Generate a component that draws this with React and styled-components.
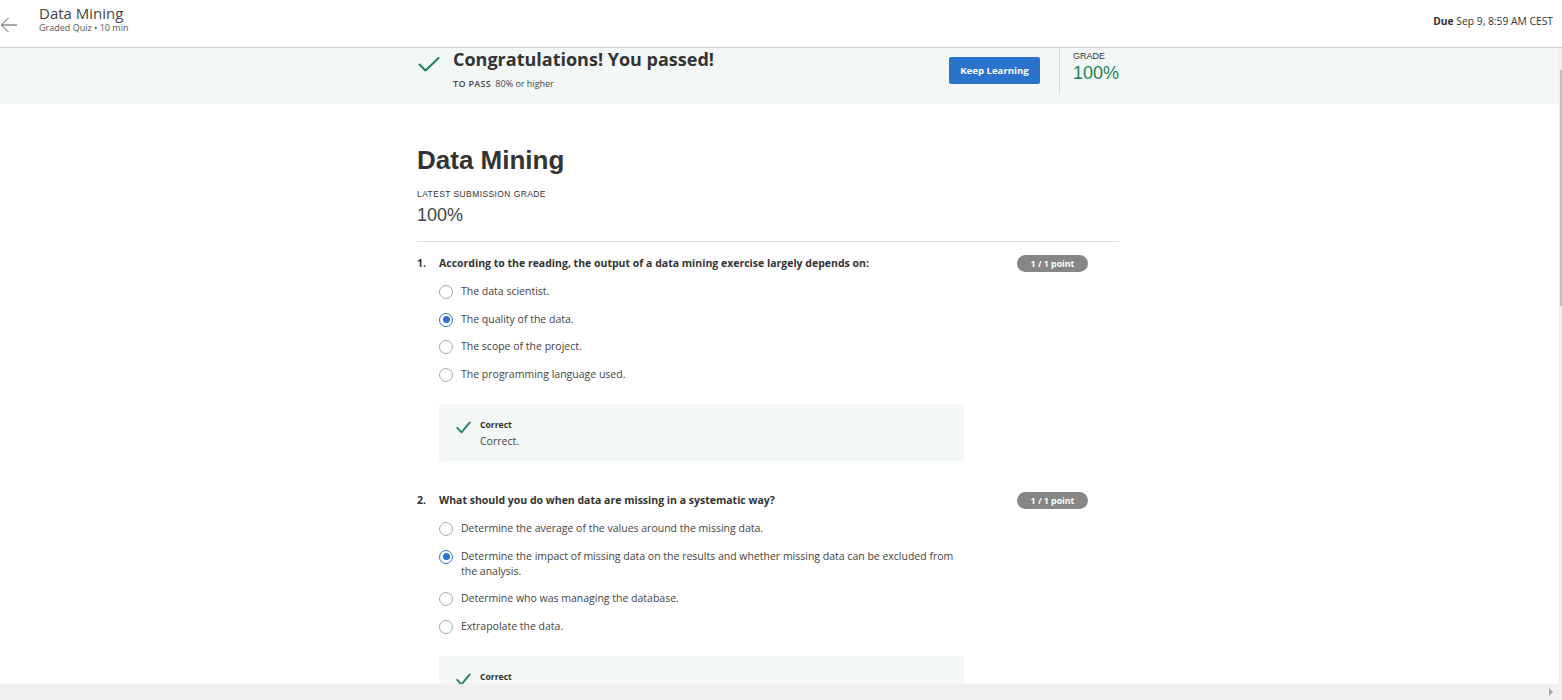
import React from "react";
import styled, { createGlobalStyle } from "styled-components";

const GlobalStyle = createGlobalStyle`
  html, body {
    margin: 0;
    padding: 0;
    height: 700px;
    overflow: hidden;
    background: #fff;
  }
  body {
    font-family: "Open Sans", "Liberation Sans", sans-serif;
    color: #333;
  }
`;

const questions = [
  {
    num: "1.",
    text: "According to the reading, the output of a data mining exercise largely depends on:",
    options: [
      "The data scientist.",
      "The quality of the data.",
      "The scope of the project.",
      "The programming language used.",
    ],
    selected: 1,
    feedback: "Correct.",
  },
  {
    num: "2.",
    text: "What should you do when data are missing in a systematic way?",
    options: [
      "Determine the average of the values around the missing data.",
      "Determine the impact of missing data on the results and whether missing data can be excluded from the analysis.",
      "Determine who was managing the database.",
      "Extrapolate the data.",
    ],
    selected: 1,
    feedback: "Correct.",
  },
];

function BigCheck() {
  return (
    <svg width="22" height="15" viewBox="0 0 22 15" fill="none">
      <polyline
        points="1.5,7.5 7.5,13.5 20.5,1"
        stroke="#1f8354"
        strokeWidth="2"
        strokeLinecap="round"
        strokeLinejoin="round"
      />
    </svg>
  );
}

function SmallCheck() {
  return (
    <svg width="15" height="13" viewBox="0 0 15 13" fill="none">
      <polyline
        points="1.2,6.8 5.5,11.4 13.8,1.4"
        stroke="#1f8354"
        strokeWidth="1.8"
        strokeLinecap="round"
        strokeLinejoin="round"
      />
    </svg>
  );
}

export default function App() {
  return (
    <>
      <GlobalStyle />
      <Page>
        <Header>
          <BackButton aria-label="Back">
            <svg width="18" height="16" viewBox="0 0 18 16" fill="none">
              <path d="M17 8H1.5M8.5 1L1.5 8l7 7" stroke="#555" strokeWidth="1" />
            </svg>
          </BackButton>
          <HeaderTitles>
            <HeaderTitle>Data Mining</HeaderTitle>
            <HeaderSub>Graded Quiz • 10 min</HeaderSub>
          </HeaderTitles>
          <DueText>
            <b>Due</b> Sep 9, 8:59 AM CEST
          </DueText>
        </Header>

        <Viewport>
          <Scroller>
            <Banner>
              <Column>
                <BannerRow>
                  <PassBlock>
                    <PassIcon>
                      <BigCheck />
                    </PassIcon>
                    <div>
                      <PassTitle>Congratulations! You passed!</PassTitle>
                      <PassSub>
                        <b>TO PASS</b> 80% or higher
                      </PassSub>
                    </div>
                  </PassBlock>
                  <PrimaryButton>Keep Learning</PrimaryButton>
                  <VDivider />
                  <GradeBlock>
                    <GradeLabel>GRADE</GradeLabel>
                    <GradeValue>100%</GradeValue>
                  </GradeBlock>
                </BannerRow>
              </Column>
            </Banner>

            <Column>
              <QuizTitle>Data Mining</QuizTitle>
              <SmallCaps>LATEST SUBMISSION GRADE</SmallCaps>
              <LatestGrade>100%</LatestGrade>
              <HDivider />

              {questions.map((q) => (
                <Question key={q.num}>
                  <QuestionHead>
                    <QNum>{q.num}</QNum>
                    <QText>{q.text}</QText>
                    <PointBadge>1 / 1 point</PointBadge>
                  </QuestionHead>
                  <Options>
                    {q.options.map((o, i) => (
                      <Option key={o}>
                        <Radio $checked={i === q.selected} />
                        <OptionText>{o}</OptionText>
                      </Option>
                    ))}
                  </Options>
                  <Feedback>
                    <FeedbackIcon>
                      <SmallCheck />
                    </FeedbackIcon>
                    <div>
                      <FeedbackLabel>Correct</FeedbackLabel>
                      <FeedbackText>{q.feedback}</FeedbackText>
                    </div>
                  </Feedback>
                </Question>
              ))}
            </Column>
          </Scroller>
          <HScrollBar>
            <ScrollArrow />
          </HScrollBar>
          <VScrollTrack>
            <VScrollThumb />
          </VScrollTrack>
        </Viewport>
      </Page>
    </>
  );
}

const Page = styled.div`
  height: 700px;
  display: flex;
  flex-direction: column;
`;

const Header = styled.header`
  height: 47px;
  flex-shrink: 0;
  display: flex;
  align-items: center;
  border-bottom: 1px solid #c8cccb;
  padding-right: 9px;
`;

const BackButton = styled.div`
  width: 39px;
  display: flex;
  align-items: center;
  margin-top: 2px;
`;

const HeaderTitles = styled.div`
  display: flex;
  flex-direction: column;
  flex: 1;
  margin-top: -11px;
`;

const HeaderTitle = styled.div`
  font-size: 15px;
  line-height: 20px;
  color: #444;
`;

const HeaderSub = styled.div`
  font-size: 9px;
  line-height: 10px;
  color: #555;
`;

const DueText = styled.div`
  font-size: 10.3px;
  color: #333;
  margin-top: -6px;
  b {
    font-weight: 700;
  }
`;

const Viewport = styled.div`
  flex: 1;
  position: relative;
  display: flex;
  flex-direction: column;
  overflow: hidden;
`;

const Scroller = styled.div`
  flex: 1;
  overflow: hidden;
`;

const Banner = styled.div`
  background: #f3f8f6;
  height: 56px;
`;

const Column = styled.div`
  width: 702px;
  margin-left: calc(50% - 364px);
`;

const BannerRow = styled.div`
  display: flex;
  align-items: flex-start;
`;

const PassBlock = styled.div`
  flex: 0 0 532px;
  display: flex;
  align-items: flex-start;
`;

const PassIcon = styled.div`
  width: 35px;
  padding-left: 1px;
  padding-top: 7px;
`;

const PassTitle = styled.div`
  font-size: 18px;
  font-weight: 700;
  line-height: 23px;
  color: #333;
`;

const PassSub = styled.div`
  font-size: 9px;
  color: #444;
  margin-top: 6px;
  b {
    font-weight: 600;
    letter-spacing: 0.3px;
    margin-right: 2px;
  }
`;

const PrimaryButton = styled.button`
  width: 91px;
  height: 27px;
  margin-top: 9px;
  border: none;
  border-radius: 2px;
  background: #2a73cc;
  color: #fff;
  font-family: "Open Sans", sans-serif;
  font-size: 9.6px;
  font-weight: 700;
  padding: 0;
`;

const VDivider = styled.div`
  width: 1px;
  height: 46px;
  background: #d6d9d8;
  margin-left: 19px;
  margin-right: 13px;
`;

const GradeBlock = styled.div`
  font-family: "Liberation Sans", Arial, sans-serif;
  padding-top: 3px;
`;

const GradeLabel = styled.div`
  font-size: 9px;
  color: #333;
`;

const GradeValue = styled.div`
  font-size: 18px;
  color: #1f8354;
  line-height: 22px;
  margin-top: 1px;
`;

const QuizTitle = styled.h1`
  font-family: "Liberation Sans", Arial, sans-serif;
  font-size: 26px;
  font-weight: 700;
  line-height: 32px;
  color: #333;
  margin: 40px 0 0;
`;

const SmallCaps = styled.div`
  font-family: "Liberation Sans", Arial, sans-serif;
  font-size: 8.5px;
  letter-spacing: 0.4px;
  color: #333;
  margin-top: 13px;
`;

const LatestGrade = styled.div`
  font-family: "Liberation Sans", Arial, sans-serif;
  font-size: 18px;
  line-height: 22px;
  color: #444;
  margin-top: 5px;
`;

const HDivider = styled.div`
  height: 1px;
  background: #dedede;
  margin-top: 15px;
`;

const Question = styled.section`
  padding-top: 13px;
`;

const QuestionHead = styled.div`
  display: flex;
  align-items: flex-start;
  padding-right: 31px;
`;

const QNum = styled.div`
  width: 22px;
  font-size: 10.5px;
  font-weight: 700;
  line-height: 16px;
  color: #333;
`;

const QText = styled.div`
  flex: 1;
  font-size: 10.5px;
  font-weight: 700;
  line-height: 16px;
  color: #333;
`;

const PointBadge = styled.div`
  width: 71px;
  height: 17px;
  border-radius: 8.5px;
  background: #868686;
  color: #fff;
  font-size: 8.8px;
  font-weight: 700;
  display: flex;
  align-items: center;
  justify-content: center;
`;

const Options = styled.div`
  display: flex;
  flex-direction: column;
  gap: 12.7px;
  margin-top: 12px;
  margin-left: 22px;
  width: 528px;
`;

const Option = styled.div`
  display: flex;
  align-items: flex-start;
`;

const Radio = styled.span`
  box-sizing: border-box;
  width: 14px;
  height: 14px;
  flex-shrink: 0;
  border-radius: 50%;
  border: ${(p) => (p.$checked ? "1.5px solid #2a73cc" : "1px solid #a9a9a9")};
  margin-right: 8px;
  margin-top: 1px;
  display: flex;
  align-items: center;
  justify-content: center;
  &::after {
    content: "";
    width: 7px;
    height: 7px;
    border-radius: 50%;
    background: #2a73cc;
    display: ${(p) => (p.$checked ? "block" : "none")};
  }
`;

const OptionText = styled.div`
  font-size: 10.5px;
  line-height: 15px;
  color: #444;
`;

const Feedback = styled.div`
  display: flex;
  align-items: flex-start;
  width: 525px;
  margin: 22px 0 18px 22px;
  background: #f3f8f6;
  box-sizing: border-box;
  height: 57px;
  padding: 14px 0 0 17px;
`;

const FeedbackIcon = styled.div`
  width: 24px;
  margin-top: -1px;
`;

const FeedbackLabel = styled.div`
  font-size: 8.6px;
  font-weight: 700;
  line-height: 14px;
  color: #333;
`;

const FeedbackText = styled.div`
  font-size: 10.5px;
  line-height: 16px;
  color: #444;
  margin-top: 1px;
`;

const HScrollBar = styled.div`
  height: 16px;
  flex-shrink: 0;
  background: #f0f0f0;
  display: flex;
  align-items: center;
  justify-content: flex-end;
  padding-right: 9px;
`;

const ScrollArrow = styled.span`
  width: 0;
  height: 0;
  border-top: 4px solid transparent;
  border-bottom: 4px solid transparent;
  border-left: 4px solid #a3a3a3;
`;

const VScrollTrack = styled.div`
  position: absolute;
  top: 0;
  right: 0;
  bottom: 16px;
  width: 3px;
  background: #f0f0f0;
`;

const VScrollThumb = styled.div`
  margin-top: 22px;
  height: 236px;
  width: 2px;
  margin-left: 1px;
  background: #c1c1c1;
`;
